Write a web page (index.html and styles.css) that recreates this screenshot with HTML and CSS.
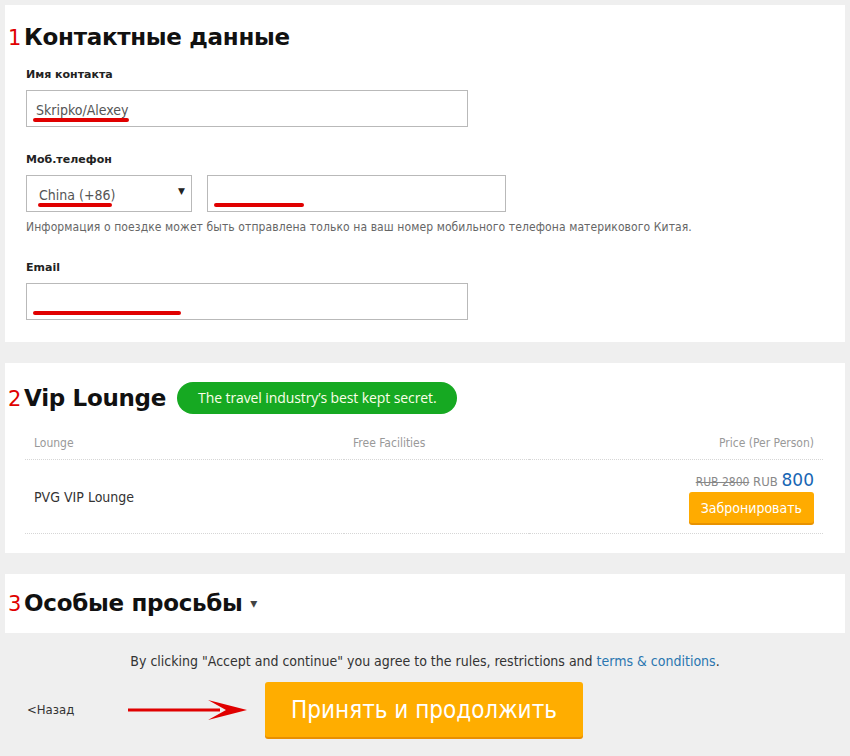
FILE: index.html
```html
<!DOCTYPE html>
<html>
<head>
    <meta charset="UTF-8">
    <title>Контактные данные</title>
    <link rel="stylesheet" href="styles.css">
</head>
<body>
    <div class="page">
        <section class="panel contact">
            <h2 class="step-title"><span class="step-num">1</span>Контактные данные</h2>

            <div class="field">
                <label class="field-label">Имя контакта</label>
                <div class="input wide">
                    <span class="input-text">Skripko/Alexey</span>
                    <span class="mark" style="left: 6px; width: 96px;"></span>
                </div>
            </div>

            <div class="field">
                <label class="field-label">Моб.телефон</label>
                <div class="phone-row">
                    <div class="input select">
                        <span class="input-text">China (+86)</span>
                        <span class="caret">&#9660;</span>
                        <span class="mark" style="left: 11px; width: 74px;"></span>
                    </div>
                    <div class="input phone">
                        <span class="mark" style="left: 6px; width: 90px;"></span>
                    </div>
                </div>
                <p class="help">Информация о поездке может быть отправлена только на ваш номер мобильного телефона материкового Китая.</p>
            </div>

            <div class="field">
                <label class="field-label">Email</label>
                <div class="input wide">
                    <span class="mark" style="left: 6px; width: 148px;"></span>
                </div>
            </div>
        </section>

        <section class="panel vip">
            <div class="vip-head">
                <h2 class="step-title"><span class="step-num">2</span>Vip Lounge</h2>
                <span class="badge">The travel industry’s best kept secret.</span>
            </div>
            <table class="lounge-table">
                <thead>
                    <tr>
                        <th class="col-name">Lounge</th>
                        <th class="col-fac">Free Facilities</th>
                        <th class="col-price">Price (Per Person)</th>
                    </tr>
                </thead>
                <tbody>
                    <tr>
                        <td class="col-name">PVG VIP Lounge</td>
                        <td class="col-fac"></td>
                        <td class="col-price">
                            <div class="price"><s class="old">RUB 2800</s> <span class="cur">RUB</span> <span class="amount">800</span></div>
                            <button class="book-btn">Забронировать</button>
                        </td>
                    </tr>
                </tbody>
            </table>
        </section>

        <section class="panel requests">
            <h2 class="step-title"><span class="step-num">3</span>Особые просьбы <span class="dd">&#9662;</span></h2>
        </section>

        <p class="agree">By clicking "Accept and continue" you agree to the rules, restrictions and <a href="#">terms &amp; conditions</a>.</p>

        <div class="actions">
            <a class="back" href="#">&lt;Назад</a>
            <svg class="arrow" width="120" height="24" viewBox="0 0 120 24">
                <path d="M0 10.5 H92 V13.5 H0 Z" fill="#e00000"/>
                <path d="M80 2 L119 12 L80 22 L98 12 Z" fill="#e00000"/>
            </svg>
            <button class="accept-btn">Принять и продолжить</button>
        </div>
    </div>
</body>
</html>
```

FILE: styles.css
```css
body {
    margin: 0;
    background-color: #efefef;
    font-family: Tahoma, "DejaVu Sans", sans-serif;
    color: #333;
}

.page {
    padding: 5px;
}

.panel {
    background-color: #ffffff;
    margin-bottom: 21px;
}

.step-title {
    margin: 0;
    font-family: "DejaVu Sans", Verdana, sans-serif;
    font-weight: bold;
    font-size: 23px;
    color: #111;
    line-height: 30px;
    letter-spacing: -0.3px;
}

.step-num {
    color: #e00000;
    font-weight: normal;
    font-size: 21px;
    margin-right: 3px;
}

/* Contact block */
.contact {
    padding: 17px 20px 22px 3px;
}

.field {
    padding-left: 18px;
}

.contact .step-title {
    margin-bottom: 15px;
}

.field-label {
    display: block;
    font-family: "DejaVu Sans", sans-serif;
    font-weight: bold;
    font-size: 11px;
    color: #222;
    margin-bottom: 9px;
}

.input {
    position: relative;
    box-sizing: border-box;
    height: 37px;
    border: 1px solid #b9b9b9;
    background: #fff;
    display: flex;
    align-items: center;
    padding-left: 9px;
    padding-top: 3px;
}

.input.wide {
    width: 442px;
    margin-bottom: 26px;
}

.input-text {
    font-family: "DejaVu Sans Condensed", sans-serif;
    font-size: 14px;
    color: #555;
}

.mark {
    position: absolute;
    bottom: 4px;
    height: 4px;
    border-radius: 2px;
    background: #e00000;
}

.phone-row {
    display: flex;
    gap: 15px;
}

.input.select {
    width: 166px;
    padding-left: 12px;
}

.caret {
    position: absolute;
    right: 6px;
    top: 10px;
    font-size: 9px;
    color: #222;
}

.input.phone {
    width: 299px;
}

.help {
    margin: 8px 0 27px;
    font-family: "DejaVu Sans Condensed", sans-serif;
    font-size: 12px;
    letter-spacing: 0.1px;
    color: #666;
}

.contact .field:last-child .input {
    margin-bottom: 0;
}

/* VIP lounge */
.vip {
    padding: 19px 22px 19px 3px;
}

.vip-head {
    display: flex;
    align-items: center;
    gap: 11px;
}

.badge {
    background: #16a922;
    color: #fbffe8;
    border-radius: 16px;
    padding: 0 21px;
    height: 32px;
    line-height: 32px;
    font-family: "Open Sans", sans-serif;
    font-size: 14px;
    letter-spacing: -0.1px;
}

.lounge-table {
    width: 798px;
    margin: 14px 0 0 17px;
    border-collapse: collapse;
    font-family: "DejaVu Sans Condensed", sans-serif;
}

.lounge-table th {
    font-weight: normal;
    color: #999;
    font-size: 12px;
    text-align: left;
    padding: 8px 9px 9px;
    border-bottom: 1px dotted #d6d6d6;
}

.lounge-table td {
    padding: 10px 9px 10px;
    border-bottom: 1px dotted #d6d6d6;
    font-size: 14px;
    color: #333;
}

.lounge-table .col-name {
    width: 301px;
}

.lounge-table .col-price {
    text-align: right;
}

.price {
    font-size: 13px;
    color: #888;
    margin-bottom: 2px;
}

.old {
    font-size: 12px;
    color: #888;
}

.amount {
    font-family: "DejaVu Sans", sans-serif;
    font-size: 17px;
    color: #1866b4;
}

.book-btn {
    background: #ffab00;
    border: none;
    border-radius: 3px;
    box-shadow: 0 2px 0 #e89200;
    color: #fff;
    font-family: "DejaVu Sans Condensed", sans-serif;
    font-size: 14px;
    height: 31px;
    padding: 0 12px;
}

/* Special requests */
.requests {
    padding: 14px 20px 14px 3px;
    margin-bottom: 20px;
}

.dd {
    font-size: 14px;
    color: #444;
    vertical-align: 3px;
}

.agree {
    text-align: center;
    margin: 0;
    font-family: "DejaVu Sans Condensed", sans-serif;
    font-size: 14px;
    color: #333;
}

.agree a {
    color: #2a76b0;
    text-decoration: none;
}

.actions {
    display: flex;
    align-items: center;
    margin-top: 13px;
    padding-left: 22px;
}

.back {
    font-family: "DejaVu Sans Condensed", sans-serif;
    font-size: 13px;
    color: #333;
    text-decoration: none;
    width: 101px;
}

.arrow {
    margin-right: 17px;
}

.accept-btn {
    background: #ffad00;
    border: none;
    border-radius: 3px;
    box-shadow: 0 2px 0 #e88f00;
    color: #fff;
    font-family: "DejaVu Sans Condensed", sans-serif;
    font-size: 24px;
    width: 318px;
    height: 55px;
}
```
